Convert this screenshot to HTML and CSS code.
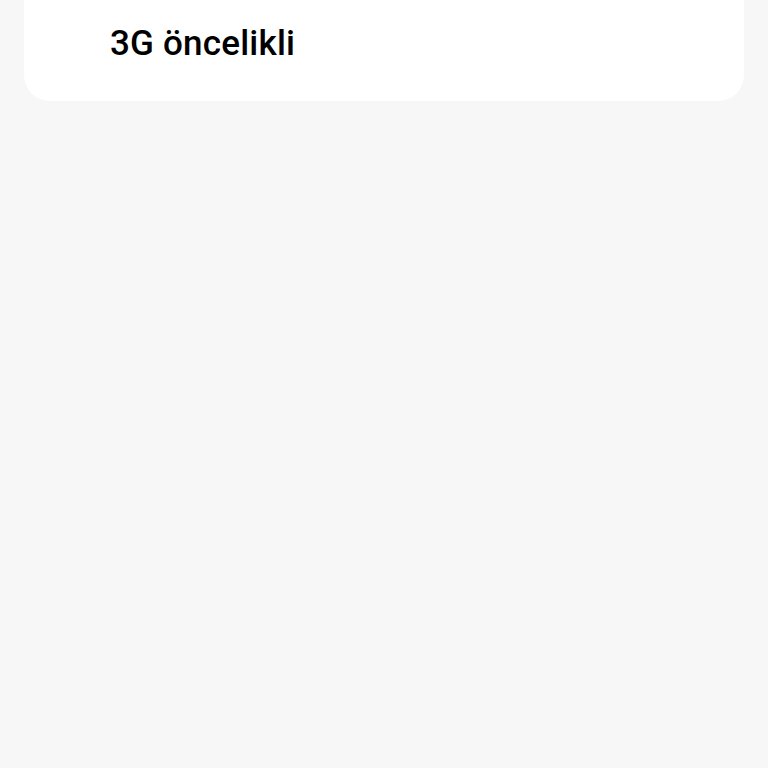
FILE: index.html
```html
<!DOCTYPE html>
<html lang="en">
<head>
    <meta charset="UTF-8">
    <meta name="viewport" content="width=device-width, initial-scale=1.0">
    <title>Ağ modu</title>
    <link rel="stylesheet" href="styles.css">
</head>
<body>
    <div class="card">
        <div class="option">3G öncelikli</div>
    </div>
</body>
</html>
```

FILE: styles.css
```css
body {
    font-family: Roboto, "Noto Sans", sans-serif;
    background: #f7f7f7;
    margin: 0;
    padding: 0 24px;
    min-height: 768px;
}

.card {
    background: #fff;
    border-radius: 0 0 26px 26px;
    height: 101px;
    display: flex;
    align-items: flex-start;
}

.option {
    padding-left: 86px;
    margin-top: 24px;
    font-size: 35px;
    font-weight: 500;
    letter-spacing: 0.2px;
    line-height: 40px;
    color: #000;
}
```
